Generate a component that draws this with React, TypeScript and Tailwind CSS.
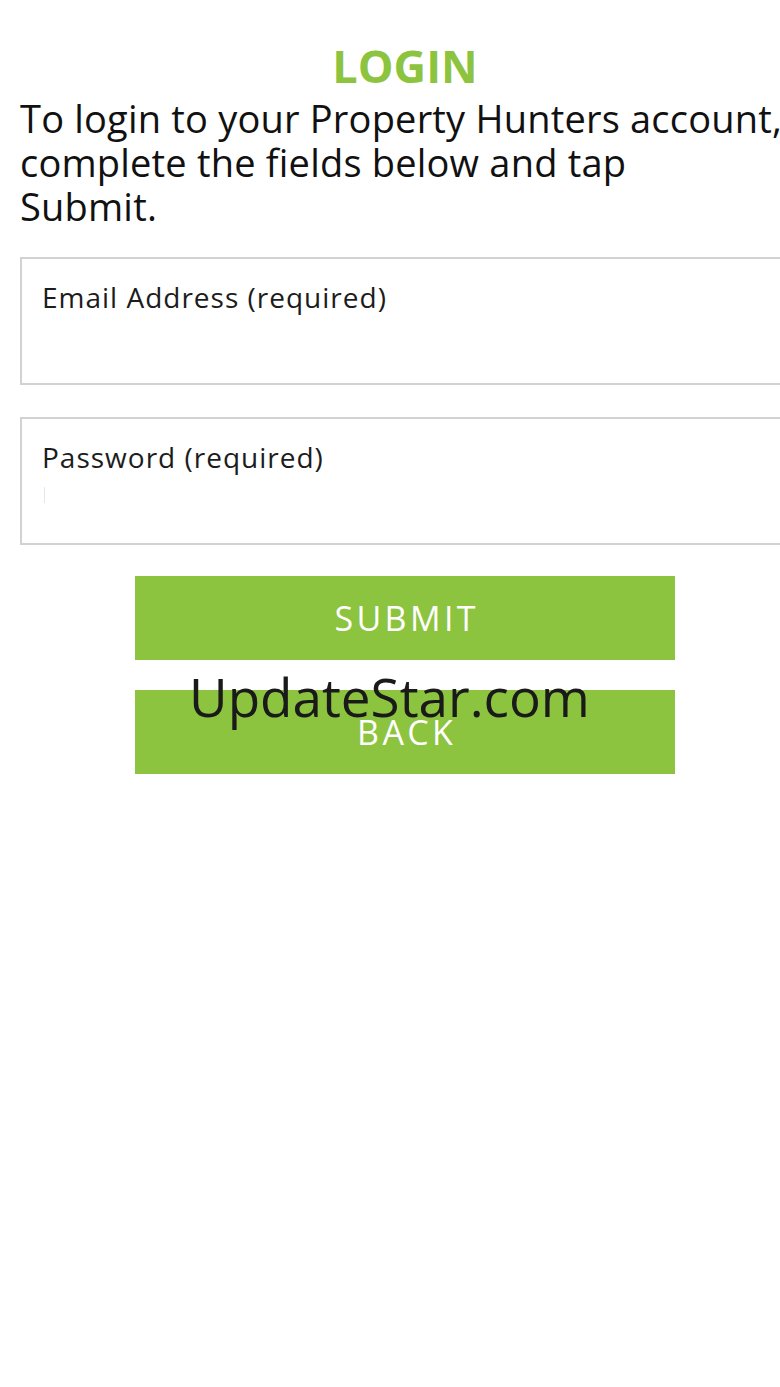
export default function App() {
  return (
    <div className="min-h-[1387px] w-full overflow-hidden bg-white font-['Open_Sans',sans-serif]">
      <div className="relative w-[810px] px-[20px] pt-[44px]">
        <h1 className="text-center text-[45px] leading-[44px] font-bold text-[#8cc43f]">LOGIN</h1>
        <p className="mt-[8px] text-[38px] leading-[44px] tracking-[0.2px] text-[#111]">
          To login to your Property Hunters account,
          <br />
          complete the fields below and tap
          <br />
          Submit.
        </p>

        <div className="mt-[29px] flex flex-col gap-[32px]">
          <div className="h-[128px] border-2 border-[#d2d2d2] pl-[20px] pt-[22px]">
            <label className="block text-[28px] leading-[32px] tracking-[1px] text-[#1c1c1c]">Email Address (required)</label>
          </div>
          <div className="h-[128px] border-2 border-[#d2d2d2] pl-[20px] pt-[22px]">
            <label className="block text-[28px] leading-[32px] tracking-[1px] text-[#1c1c1c]">Password (required)</label>
            <div className="mt-[14px] ml-[2px] h-[16px] w-px bg-[#e6e6e6]" />
          </div>
        </div>

        <div className="mt-[31px] flex flex-col items-center gap-[30px]">
          <button className="h-[84px] w-[540px] bg-[#8cc43f] pl-[0.1em] text-[34px] tracking-[0.1em] text-white">SUBMIT</button>
          <button className="h-[84px] w-[540px] bg-[#8cc43f] pl-[0.1em] text-[34px] tracking-[0.1em] text-white">BACK</button>
        </div>

        <div className="absolute left-[189px] top-[670px] text-[53px] leading-[53px] text-[#1a1a1a]">UpdateStar.com</div>
      </div>
    </div>
  );
}
